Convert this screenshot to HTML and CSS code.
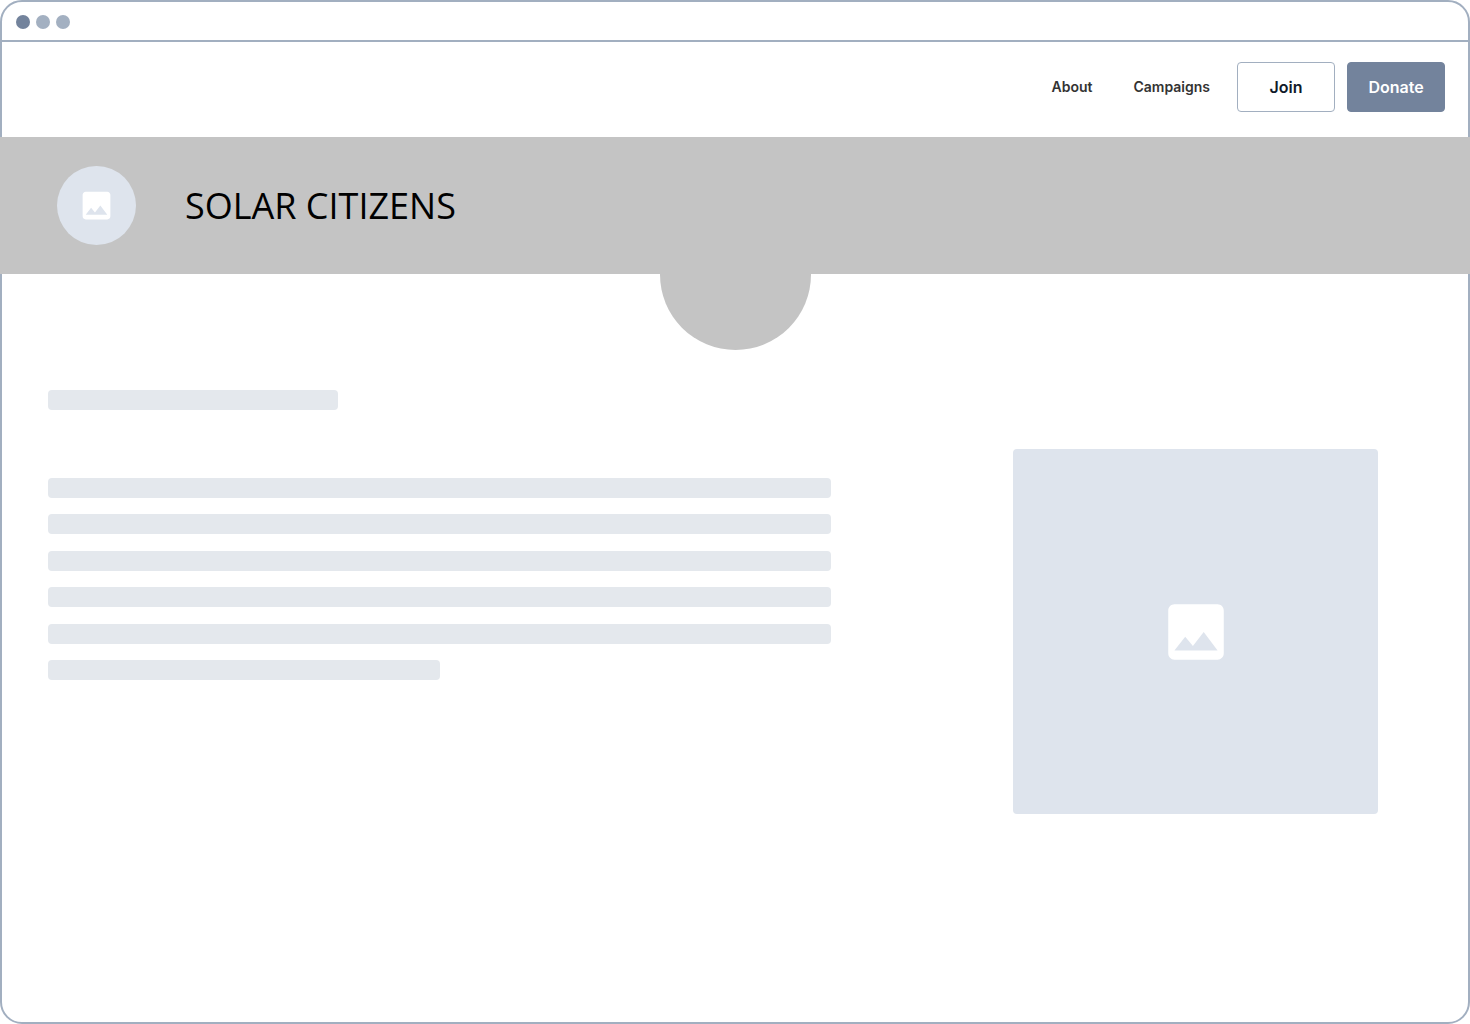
FILE: index.html
```html
<!DOCTYPE html>
<html lang="en">
<head>
  <meta charset="utf-8">
  <meta name="viewport" content="width=device-width, initial-scale=1">
  <title>Solar Citizens</title>
  <link rel="stylesheet" href="styles.css">
</head>
<body>
  <div class="window">
    <div class="window-bar">
      <span class="dot dot-active"></span>
      <span class="dot"></span>
      <span class="dot"></span>
    </div>

    <header class="site-header">
      <nav class="nav">
        <a class="nav-link" href="#about">About</a>
        <a class="nav-link" href="#campaigns">Campaigns</a>
      </nav>
      <div class="actions">
        <button class="button button-outline" type="button">Join</button>
        <button class="button button-solid" type="button">Donate</button>
      </div>
    </header>

    <section class="hero">
      <div class="avatar">
        <svg class="avatar-icon" viewBox="0 0 24 24" aria-hidden="true"><path fill="currentColor" d="M21 19V5c0-1.100-.9-2-2-2H5c-1.100 0-2 .9-2 2v14c0 1.100.9 2 2 2h14c1.100 0 2-.9 2-2zM8.500 13.500l2.500 3.010L14.500 12l4.500 6H5l3.500-4.500z"/></svg>
      </div>
      <h1 class="title">SOLAR CITIZENS</h1>
    </section>

    <main class="content">
      <div class="copy">
        <div class="line line-heading"></div>
        <div class="paragraph">
          <div class="line"></div>
          <div class="line"></div>
          <div class="line"></div>
          <div class="line"></div>
          <div class="line"></div>
          <div class="line line-half"></div>
        </div>
      </div>
      <div class="picture">
        <svg class="picture-icon" viewBox="0 0 24 24" aria-hidden="true"><path fill="currentColor" d="M21 19V5c0-1.100-.9-2-2-2H5c-1.100 0-2 .9-2 2v14c0 1.100.9 2 2 2h14c1.100 0 2-.9 2-2zM8.500 13.500l2.500 3.010L14.500 12l4.500 6H5l3.500-4.500z"/></svg>
      </div>
    </main>
  </div>
</body>
</html>
```

FILE: styles.css
```css
* {
  box-sizing: border-box;
}

body {
  margin: 0;
  background: #fff;
  font-family: Inter, "Liberation Sans", sans-serif;
}

.window {
  min-height: 100vh;
  border: 2px solid #a2afc0;
  border-radius: 22px;
}

.window-bar {
  display: flex;
  align-items: center;
  gap: 6px;
  padding: 13px 14px 11px;
  border-bottom: 2px solid #a2afc0;
}

.dot {
  width: 14px;
  height: 14px;
  border-radius: 50%;
  background: #a3b0c1;
}

.dot-active {
  background: #73839c;
}

.site-header {
  display: flex;
  justify-content: flex-end;
  align-items: center;
  gap: 27px;
  padding: 20px 23px 25px;
}

.nav {
  display: flex;
  gap: 41px;
}

.nav-link {
  color: #333;
  font-size: 14px;
  font-weight: 600;
  line-height: 20px;
  text-decoration: none;
}

.actions {
  display: flex;
  gap: 12px;
}

.button {
  width: 98px;
  height: 50px;
  padding: 0;
  border: 1px solid #a2afc0;
  border-radius: 4px;
  font-family: inherit;
  font-size: 16px;
  font-weight: 600;
  cursor: pointer;
}

.button-outline {
  background: #fff;
  color: #0f1a2a;
}

.button-solid {
  border-color: #73839c;
  background: #73839c;
  color: #fff;
}

/* The band runs over the window's side borders. */
.hero {
  position: relative;
  display: flex;
  align-items: center;
  gap: 49px;
  margin: 0 -2px;
  padding: 29px 57px;
  background: #c4c4c4;
}

.hero::after {
  content: "";
  position: absolute;
  top: 100%;
  left: calc(50% - 75px);
  width: 151px;
  height: 76px;
  border-radius: 0 0 76px 76px;
  background: #c4c4c4;
}

.avatar {
  display: flex;
  align-items: center;
  justify-content: center;
  flex: none;
  width: 79px;
  height: 79px;
  border-radius: 50%;
  background: #dee4ed;
  color: #fff;
}

.avatar-icon {
  width: 37px;
  height: 37px;
}

.title {
  margin: 0;
  color: #000;
  font-family: "Open Sans", sans-serif;
  font-size: 36px;
  font-weight: 400;
  line-height: 48px;
}

.content {
  display: flex;
  justify-content: space-between;
  align-items: flex-start;
  gap: 48px;
  padding: 116px 90px 48px 46px;
}

.copy {
  flex: 0 1 783px;
}

.line {
  height: 20px;
  border-radius: 4px;
  background: #e4e8ed;
}

.line-heading {
  width: 290px;
  max-width: 100%;
}

.line-half {
  width: 50%;
}

.paragraph {
  display: flex;
  flex-direction: column;
  justify-content: space-between;
  height: 202px;
  margin-top: 68px;
}

.picture {
  display: flex;
  align-items: center;
  justify-content: center;
  flex: 0 1 365px;
  aspect-ratio: 1;
  margin-top: 59px;
  border-radius: 4px;
  background: #dee4ed;
  color: #fff;
}

.picture-icon {
  width: 74px;
  height: 74px;
}
```
